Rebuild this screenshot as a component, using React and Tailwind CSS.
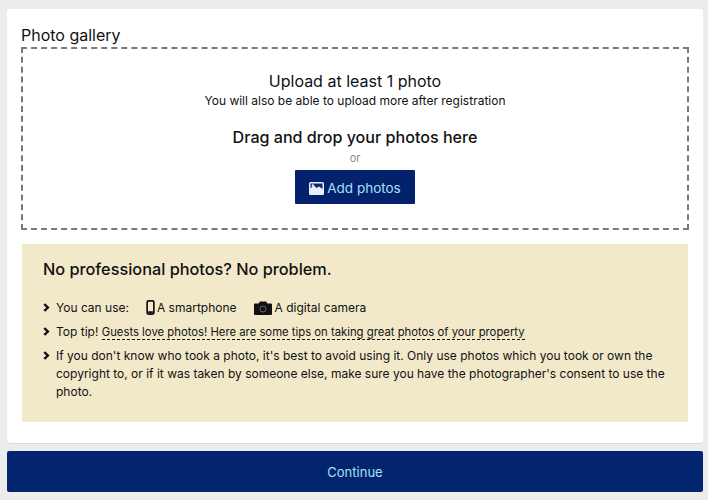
const Chevron = () => (
  <svg viewBox="0 0 8 10" className="w-[7px] h-[9px] shrink-0 mt-[4px]" fill="none" stroke="#111" strokeWidth="2.800">
    <path d="M1.500 1 L5.500 5 L1.500 9" />
  </svg>
);

const PhoneIcon = () => (
  <svg viewBox="0 0 9 16" className="w-[9px] h-[15px] shrink-0">
    <rect x="0.900" y="0.900" width="7.200" height="14.200" rx="1.400" fill="none" stroke="#111" strokeWidth="1.800" />
    <rect x="2" y="12" width="5" height="2.400" fill="#111" />
  </svg>
);

const CameraIcon = () => (
  <svg viewBox="0 0 18 14" className="w-[18px] h-[14px] shrink-0">
    <path
      fill="#111"
      d="M1 2.500h3.500L6 0.500h6l1.500 2H17a1 1 0 0 1 1 1V13a1 1 0 0 1-1 1H1a1 1 0 0 1-1-1V3.500a1 1 0 0 1 1-1Z"
    />
    <circle cx="9" cy="8" r="3" fill="none" stroke="#666" strokeWidth="1" />
  </svg>
);

const ImageIcon = () => (
  <svg viewBox="0 0 15 13" className="w-[15px] h-[13px] shrink-0">
    <rect x="0" y="0" width="15" height="13" rx="1.500" fill="#e6f0fa" />
    <path d="M1.500 6.500 L4.500 3 L7.500 6 L10 4.500 L13.500 7 V1.500 H1.500 Z" fill="#0b2a73" />
    <circle cx="3.800" cy="3.400" r="1.100" fill="#e6f0fa" />
  </svg>
);

const App = () => {
  return (
    <div className="w-[708px] h-[500px] bg-[#ececec] pt-[9px] pl-[7px] pr-[5px] text-[#111] font-['Inter','Liberation_Sans',sans-serif] overflow-hidden">
      <div className="h-[434px] bg-white rounded-[3px] pt-[15px] pl-[14px] pr-[14px] shadow-[0_1px_0_#d5dae0]">
        <h2 className="text-[16px] leading-[23px] h-[23px]">Photo gallery</h2>
        <div className="h-[183px] border-2 border-dashed border-[#7a7a7a] flex flex-col items-center pt-[22px]">
          <div className="text-[16px] leading-[20px] font-normal">Upload at least 1 photo</div>
          <div className="text-[12px] leading-[20px]">You will also be able to upload more after registration</div>
          <div className="text-[16.100px] leading-[22px] font-medium mt-[15px]">Drag and drop your photos here</div>
          <div className="text-[11px] leading-[14px] text-[#8a8a8a] mt-[3px]">or</div>
          <button className="mt-[5px] w-[120px] h-[34px] pt-[2px] bg-[#03216c] rounded-[1px] flex items-center justify-center gap-[3px] text-[#a5e0f7] text-[13.500px]">
            <ImageIcon />
            Add photos
          </button>
        </div>
        <div className="mt-[14px] ml-[1px] mr-[1px] h-[178px] bg-[#f2e9ca] pt-[15px] pl-[21px] pr-[20px]">
          <div className="text-[16.300px] leading-[20px] font-medium">No professional photos? No problem.</div>
          <ul className="mt-[20px] text-[12px] leading-[17px]">
            <li className="flex gap-[6px] h-[17px]">
              <Chevron />
              <div className="flex items-center">
                <span>You can use:</span>
                <span className="ml-[17px] mr-[2px]"><PhoneIcon /></span>
                <span>A smartphone</span>
                <span className="ml-[17px] mr-[3px]"><CameraIcon /></span>
                <span>A digital camera</span>
              </div>
            </li>
            <li className="flex gap-[6px] mt-[7px]">
              <Chevron />
              <div>
                Top tip! <span className="text-[11.300px] border-b border-dashed border-[#111]">Guests love photos! Here are some tips on taking great photos of your property</span>
              </div>
            </li>
            <li className="flex gap-[6px] mt-[6px]">
              <Chevron />
              <p className="leading-[18px]">
                If you don't know who took a photo, it's best to avoid using it. Only use photos which you took or own the copyright to, or if it was taken by someone else, make sure you have the photographer's consent to use the photo.
              </p>
            </li>
          </ul>
        </div>
      </div>
      <button className="mt-[8px] w-full h-[41px] pt-[2px] bg-[#03256f] rounded-[2px] text-[#a5e0f7] text-[13px]">Continue</button>
    </div>
  );
};

export default App;
